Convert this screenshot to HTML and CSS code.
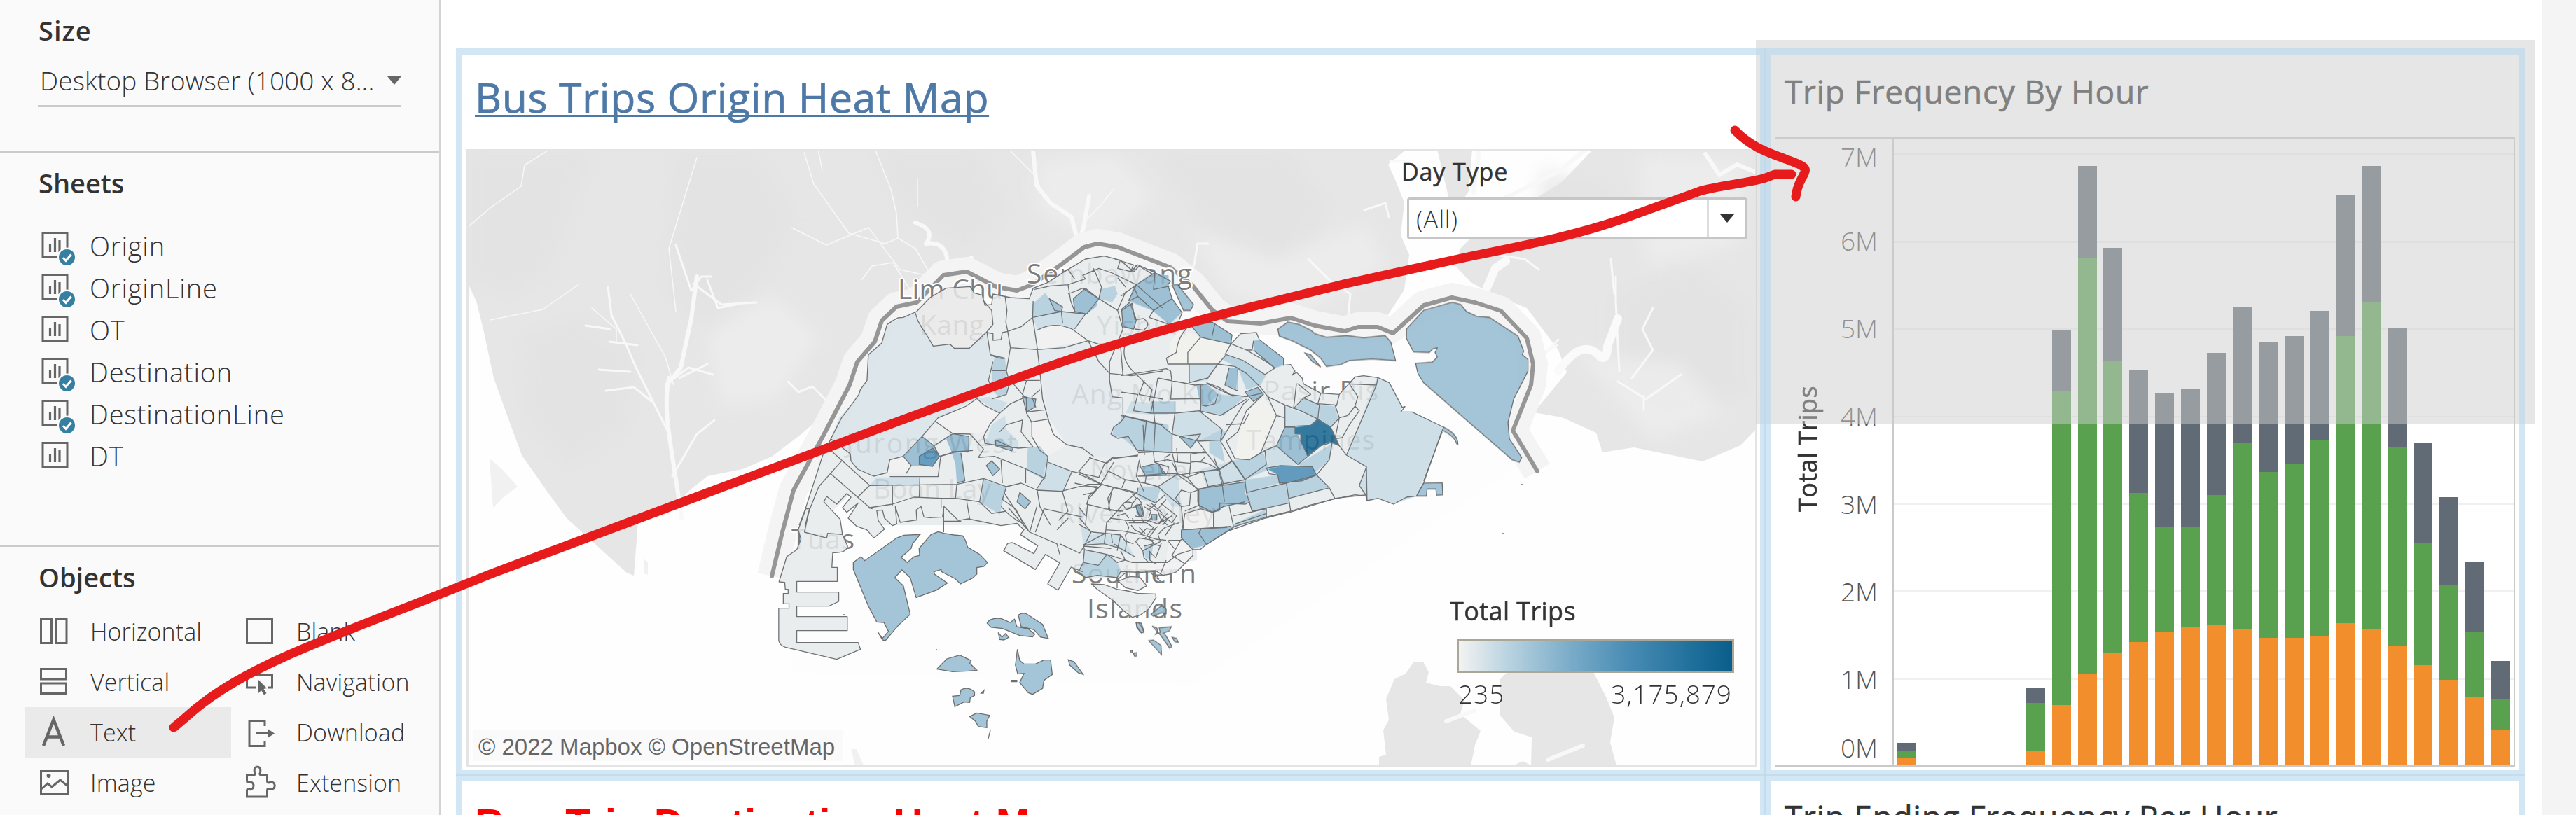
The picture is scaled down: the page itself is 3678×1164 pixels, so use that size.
FILE: index.html
```html
<!DOCTYPE html>
<html lang="en">
<head>
<meta charset="utf-8">
<title>Bus Trips Dashboard</title>
<link rel="stylesheet" href="styles.css">
</head>
<body>
<svg class="defs" aria-hidden="true">
  <symbol id="sheet" viewBox="0 0 50 50"><path d="M4 3.500h35v35h-35z" fill="none" stroke="#666" stroke-width="3"/><path d="M14.500 31V20M21.500 31V11M28 31V14" stroke="#666" stroke-width="3.200"/></symbol>
  <symbol id="check" viewBox="0 0 50 50"><circle cx="38.500" cy="38.500" r="14" fill="#fafafa"/><circle cx="38.500" cy="38.500" r="11.500" fill="#3580a0"/><path d="M33 39l4 4.500 7.500-9" fill="none" stroke="#fff" stroke-width="3"/></symbol>
</svg>
<div class="app">
  <aside class="side">
    <section class="size">
      <h2>Size</h2>
      <div class="select"><span class="sel-text">Desktop Browser (1000 x 8...</span><i class="tri"></i></div>
    </section>
    <section class="sheets">
      <h2>Sheets</h2>
      <ul>
        <li><svg viewBox="0 0 50 50"><use href="#sheet"/><use href="#check"/></svg><span>Origin</span></li>
        <li><svg viewBox="0 0 50 50"><use href="#sheet"/><use href="#check"/></svg><span>OriginLine</span></li>
        <li><svg viewBox="0 0 50 50"><use href="#sheet"/></svg><span>OT</span></li>
        <li><svg viewBox="0 0 50 50"><use href="#sheet"/><use href="#check"/></svg><span>Destination</span></li>
        <li><svg viewBox="0 0 50 50"><use href="#sheet"/><use href="#check"/></svg><span>DestinationLine</span></li>
        <li><svg viewBox="0 0 50 50"><use href="#sheet"/></svg><span>DT</span></li>
      </ul>
    </section>
    <section class="objects">
      <h2>Objects</h2>
      <div class="grid">
        <div class="obj"><svg viewBox="0 0 46 46"><path d="M1.500 4.500h15v35h-15zM23 4.500h15v35h-15z"/></svg><span>Horizontal</span></div>
        <div class="obj"><svg viewBox="0 0 46 46"><path d="M1.500 4.500h36v35h-36z"/></svg><span>Blank</span></div>
        <div class="obj"><svg viewBox="0 0 46 46"><path d="M1.500 4.500h36v14.500h-36zM1.500 25h36v14.500h-36z"/></svg><span>Vertical</span></div>
        <div class="obj"><svg viewBox="0 0 46 46"><path d="M15 31H1.500V13h36v18H32"/><path class="solid" d="M18 20l12 12-4.500 1 4 6-3.500 2.500-4-6.500-4 4z"/></svg><span>Navigation</span></div>
        <div class="obj on"><svg viewBox="0 0 46 46"><path stroke-width="4.500" d="M5 42L19.500 5 34 42M9.500 29.500h20"/></svg><span>Text</span></div>
        <div class="obj"><svg viewBox="0 0 46 46"><path d="M27 14V6.500H5v36h22V35M15 24.500h18"/><path class="solid" d="M32 18.500l9 6-9 6z"/></svg><span>Download</span></div>
        <div class="obj"><svg viewBox="0 0 46 46"><path d="M1.500 6.500h38.500v33H1.500zM2 32l9-8 6 5 12-10 11 9"/><circle class="solid" cx="12.500" cy="13" r="3"/></svg><span>Image</span></div>
        <div class="obj"><svg viewBox="0 0 46 46"><path d="M1.500 12h10c2 0 2-2 1-3.500C10-3 23-3 20.500 8.500c-1 1.500-1 3.500 1 3.500h9v9c0 2 2 2.500 4 1 9-2 9 12 0 10.500-2-1.500-4-1-4 1V43h-29V34c0-2 1.500-2.500 3.500-1.500 8 1.500 8-12 0-10.500-2 1-3.500 .5-3.500-1.500z"/></svg><span>Extension</span></div>
      </div>
    </section>
  </aside>

  <main class="board">
    <div class="zones">
      <section class="card origin">
        <h1><a>Bus Trips Origin Heat Map</a></h1>
        <div class="map">
          <svg class="geo" viewBox="666 213 1843 883" preserveAspectRatio="none">
            <g class="land">
              <path d="M666 213H2008L1982 235 1991 254 2005 289 2000 336 2012 364 2005 414 1975 460 1840 450 1750 460 1700 410 1660 380 1567 350 1452 415 1380 390 1309 432 1259 460 1215 545 1175 593 1144 620 1102 652 1060 670 1010 680 985 700 950 735 911 745 905 822 895 818 875 800 809 740 780 700 745 650 723 590 705 540 690 470 680 430 666 400Z"/>
              <path d="M2052 213h50l-5 60-12 18-15-2z"/>
              <path d="M2120 300L2190 285 2230 260 2275 213H2509V611L2485 636 2431 659 2333 639 2288 646 2279 618 2230 596 2190 589 2237 532 2225 500 2180 440 2130 420 2100 403 2078 380 2085 355 2110 330Z"/>
              <path d="M699 655l18 15 22 25-20 15-15 15z" class="lt"/>
              <path d="M919 798l6 5 0 18-6-2zM1215 1070h8l10 23h-12z" class="lt"/>
              <path d="M1969 1093v-12l10-3-4-35 8-15-4-30 12-28 16-8 12-17h13l8 15-4 15 20 5 15 0 20 20-6 20 15 12 14 12-8 20-8 40z"/>
              <path d="M2162 1093l12-6 12 6 1-40-25-8-21-24 0-50 25-25-5-18 10-10 18 4 2 12 9-12 0-10 15 8 60 40 18 35 12 30-6 35 8 30 8 10z"/>
            </g>
            <g class="tone">
              <path d="M666 213h190l-30 60-40 120-60 30-60-20zM960 213h120l60 100-50 90-80 60-60-40zM740 480l90-30 80 40-10 120-90 60-60-70zM1240 213h160l40 90-60 60-90-60zM1640 213h200l60 80-60 100-110-60zM2300 420l120-40 80 60v120l-120 40-80-70zM2200 240l110 30-20 60-100 10z"/>
            </g>
            <g class="tone2">
              <path d="M1010 480l90-60 70 60-60 90-80 10zM1480 230l110-10 60 60-80 70-90-50zM1700 330l120 40 130-50 30 60-120 70-110-30zM2340 220l150 10-10 120-130 30zM2250 500l150 20 60 70-100 40z"/>
            </g>
            <g class="river">
              <path d="M666 326l35-30 43-30 5-30 55-35 40-6M700 457l75-15 50-35M845 440l35 30 0 20M1168 213l6 30M1250 215l22 55 8 35 2 35 25 15 22 38 5 25M1282 340l-18 8-52-15-50-70-14-45M1310 295l0-40M1440 213l40 40 10 30M1590 270l-20 25-20 20M1130 325l50 25 60-25 45 60 45 10M1230 400l15-20 30-5 25 40M900 420l50 90 12 40M965 445l-10-90 40-130"/>
              <path class="w4" d="M868 410l5 40 20 40 15 35 20 40 25 50M836 465l35 5M855 528l45 3M865 558l40-5 25 20M870 488l40 5M965 350l10 30 12 35 14-20 15 0M990 405l40 30 50-3M1010 400l15 40 40-8M1018 535l-35-10-20 15M960 680l35-60 25-20M1125 545l15 15 20-8 18 18M1010 520l-40 20"/>
              <path class="w8" d="M995 395l-8 60-15 70-20 25M955 540c-10 50 5 100 18 200M1307 318q30 10 15 30 35-5 30 40l35-20M1475 215l5 50 20 25 30 20 10 40M1555 280l-8 45-10 30"/>
              <path class="w4" d="M1725 348l-15 0-5 30-5 10M1868 370l30 30 30 20-3 30M1985 230l20 0M1948 300l30-10 5 20M2142 365l35 5 20 15M2180 510l25-5 20-20M2305 420l-5-50M2312 530l-5-100 0-35M2330 540l30-40-15-30 15-30M2310 545l40 25 50-35M2347 565l0 20M2180 510l25-5 18-12"/>
              <path class="w14" d="M2225 530q35-50 60-20 10 5 10-15l15-40M2120 418l15-35 15-10"/>
              <path class="w8" d="M2435 220l20 30 25-15 25 10M2110 300l55-25 60-30 40-32M2112 215l-8 60M2210 935l10-12 15 2M2065 1030l40-15M2210 1085l50-20"/>
            </g>
            <path class="halo" d="M1102 823L1117 760 1133 700 1175 623 1213 550 1224 517 1249 488 1259 458 1280 438 1309 432 1347 393 1380 388 1423 410 1452 415 1473 407 1515 378 1548 353 1567 348 1596 353 1671 382 1702 407 1731 443 1753 459 1800 462 1843 454 1877 465 1920 473 1939 467 1967 467 1989 476 2033 436 2073 425 2106 432 2143 444 2180 483 2189 520 2186 550 2160 615 2195 673"/>
            <path class="inner" d="M1130 820L1150 710 1190 640 1235 550 1270 480 1310 450 1380 410 1470 430 1567 368 1660 400 1740 475 1850 480 1985 495 2050 450 2110 450 2165 500 2170 560 2140 620 2165 668 1700 980 1130 960Z"/>
            <path class="border" d="M1102 823L1117 760 1133 700 1175 623 1213 550 1224 517 1249 488 1259 458 1280 438 1309 432 1347 393 1380 388 1423 410 1452 415 1473 407 1515 378 1548 353 1567 348 1596 353 1671 382 1702 407 1731 443 1753 459 1800 462 1843 454 1877 465 1920 473 1939 467 1967 467 1989 476 2033 436 2073 425 2106 432 2143 444 2180 483 2189 520 2186 550 2160 615 2195 673"/>
            <g class="names">
              <text x="1282" y="427" textLength="150">Lim Chu</text><text x="1313" y="478" textLength="92">Kang</text>
              <text x="1466" y="405" textLength="236">Sembawang</text><text x="1566" y="479" textLength="130">Yishun</text>
              <text x="1530" y="577" textLength="216">Ang Mo Kio</text><text x="1208" y="647" textLength="244">Jurong West</text>
              <text x="1247" y="712" textLength="168">Boon Lay</text><text x="1556" y="685" textLength="140">Novena</text>
              <text x="1511" y="747" textLength="224">River Valley</text><text x="1804" y="572" textLength="164">Pasir Ris</text>
              <text x="1779" y="642" textLength="184">Tampines</text><text x="1130" y="784" textLength="90">Tuas</text>
              <text x="1530" y="833" textLength="178">Southern</text><text x="1552" y="883" textLength="136">Islands</text>
            </g>
            <g class="fills">
              <g class="base">
                <path transform="translate(1060 330) scale(.38265 .33333)" d="M1590 190L1530 185 1480 150 1460 175 1410 125 1350 107 1280 120 1200 175 1140 220 1085 245 1070 290 1000 285 935 270 930 315 905 318 895 275 865 265 850 238 760 245 700 285 650 345 600 370 540 400 520 480 470 530 465 640 410 740 370 800 330 890 300 960 235 1190 212 1260 360 1260 300 1155 340 1195 400 1130 415 1150 375 1200 430 1165 480 1260H1590Z"/>
                <path transform="translate(1060 660) scale(.40816 .33333)" d="M280 0L222 200 195 290 205 330 190 375 155 405 128 513 148 515 150 545 160 545 160 563 143 563 143 607 163 607 163 626 127 626 127 765Q130 785 150 793L330 845 413 802 405 773H190V722H367V662H190V617H303L337 597V557H190V511H332V451H313L316 388Q365 390 368 360L350 310 342 245 285 170 295 147 330 180 365 135 380 150 350 195 365 215 405 175 370 240 400 275 435 290 460 325 497 287 475 250 470 207 490 205 497 240 525 272 540 265 535 190 552 258 610 248 608 205 625 190 635 235 655 238 700 235 705 190 755 250 790 243 905 272 960 262 985 290 972 310 1033 358 1020 392 945 345 928 348 914 380 1025 460 1060 395 1110 432 1068 522 1104 549 1150 450 1190 470 1215 500 1320 495 1350 460 1590 420V0Z"/>
                <path transform="translate(1540 640) scale(.33333)" d="M0 0H1260V225L1235 230V200L1185 205 1100 215 905 275 800 300 640 355 600 380 545 415 520 435 490 435 490 460 455 495 420 530 390 540 360 545 330 525 180 530 165 555 80 545 30 555 0 530Z"/>
                <path transform="translate(1600 330) scale(.40816 .33333)" d="M-20 185V120L45 145 60 145 115 175 175 215 165 230 180 290 215 350 205 380 250 405 320 390 390 445 385 485 420 440 475 435 485 465 570 545V575L595 572 610 600 635 630 640 655 700 695 765 700 820 625 850 620 900 628 940 650 985 755 980 775 1020 775 1130 840 1120 870 1060 1080 1035 1135 1000 1140 955 1170 900 1145 862 1155 860 1135 750 1147 595 1200 510 1225 400 1265 330 1320H-20Z"/>
                <path transform="translate(1540 640) scale(.33333)" d="M55 582L110 585 165 605 210 612 250 622 330 625 332 640 300 690 265 715 230 725 190 695 150 655 80 605ZM170 570L220 550 262 553 292 590 255 610 200 598Z"/>
              </g>
              <g transform="translate(1060 330) scale(.38265 .33333)">
                <path fill="#d7e2e8" d="M645 350L655 385 670 415 690 450 712 493 775 485 790 502 847 502 912 432 925 530 980 545 935 560 918 640 900 690 875 718 835 750 730 800 670 880 600 965 550 980 550 1020 490 1050 430 1020 405 985 403 955 330 890 360 800 410 740 435 690 465 640 470 530 490 510 520 480 540 400 600 370Z"/>
                <path fill="#e8e8e8" d="M650 345L700 285 760 245 850 238 865 265 895 275 935 370 932 400 912 432 847 502 790 502 775 485 712 493 685 430 665 400Z"/>
                <path fill="#e0e7eb" d="M1100 508L1290 470 1330 560 1370 610 1380 710 1420 715 1425 800 1380 850 1440 890 1475 945 1400 975 1310 965 1210 915 1145 805Z"/>
                <path fill="#efefef" d="M720 815L785 770 875 718 960 780 900 860 850 870 785 868ZM1100 425Q1160 385 1230 420L1290 470 1100 508ZM1075 818L1145 805 1210 915 1140 965 1080 920ZM550 985L600 965 630 1005 610 1040 540 1035Z"/>
                <path class="m" d="M1235 290L1280 245 1330 290 1320 325 1285 355 1240 345ZM1415 335L1445 305 1470 380 1460 420 1420 410ZM1465 240L1530 185 1590 190V350L1540 330ZM670 880L715 920 735 965 710 1005 630 1005 600 965ZM760 890L785 868 845 880V945L780 945Z"/>
                <path class="n" d="M1080 315L1130 265 1150 300 1190 345 1085 370ZM940 545L980 545 985 600 930 598ZM930 600L985 600 990 690 960 715 930 680ZM1065 930L1110 920 1140 965 1120 1060 1060 1025ZM900 1065L985 1095 960 1215 890 1165ZM1430 790L1590 830V940L1475 945 1440 890 1380 880 1385 840ZM1335 250L1390 235 1400 270 1380 305 1330 290Z"/>
                <path class="l" d="M1085 370L1190 345 1280 355 1240 420 1170 400 1100 425ZM475 1090L500 1055 662 1055V1090ZM875 718L920 710 990 735 960 780ZM905 910L930 830 980 790 985 850 1030 900 1030 930ZM1140 990L1230 1030 1195 1120 1100 1110ZM1450 730L1590 740V790L1430 780Z"/>
                <path class="k" d="M780 945L815 950 825 1000 830 1070 800 1080 795 1000ZM945 895L965 892 1010 930 1005 942 945 920ZM910 1005L930 985 960 1020 935 1048ZM1035 1120L1075 1160 1055 1190 1025 1160ZM1045 710L1095 720 1090 755 1060 775ZM1145 290L1195 325 1190 345 1165 340Z"/>
                <path fill="#4f8fb6" d="M660 965L710 930 735 965 710 1008 660 1000Z"/>
              </g>
              <g transform="translate(1060 660) scale(.40816 .33333)" class="isle">
                <path d="M388 430L415 405 428 422 540 325 565 313 622 310 595 350 590 370 555 408 577 430 600 405 620 400 618 370 660 310 685 298 705 305 740 312 770 315 780 335 788 365 830 395 857 430 845 447 820 452 820 480 805 497 763 522 745 500 697 470 695 460 670 470 672 480 717 518 680 548 608 580 587 495 558 462 533 495 563 530 587 652 545 700 500 765 490 762 475 730 490 755 511 725 495 687 470 685 440 615 388 460Z"/>
                <path d="M856 690Q865 665 905 670L937 687 952 673 960 705 1000 715 1023 737 1015 749 970 743 910 713 870 708ZM965 655Q985 640 1000 655L1050 695 1070 755 1043 750 1020 718 975 705ZM895 730L900 760 915 762 932 750 920 735 908 750ZM680 887L715 843 760 827 800 850 795 862 820 892 790 895 735 898ZM962 802L970 850 985 865 1025 865 1055 848H1078L1084 910 1055 935 1050 970 1015 995 1000 988 970 945 985 905 963 908 955 870ZM1140 847L1160 855 1192 910 1175 903 1145 870ZM940 935h20v6h-20zM765 975Q790 960 812 985V1000L797 1010 795 1030 775 1028 743 1048 735 1003 760 1000ZM795 1090L820 1075 865 1085 855 1110 855 1138 825 1133 815 1110ZM835 990L845 978 843 990ZM1377 687L1395 690 1405 725 1395 732 1380 710Z"/>
              </g>
              <g transform="translate(1600 330) scale(.40816 .33333)">
                <path class="isle" d="M550 420L585 390 625 400 665 425 680 440 720 455 790 448 850 457 925 448 945 475 962 555 880 548 800 555 770 572 720 580 700 545 665 510 600 470 555 450ZM645 523L665 530 700 583 670 558ZM1000 420L1060 340 1160 305 1190 315 1210 345 1245 365 1290 370 1390 450 1410 515 1405 530 1425 550V600L1375 720 1355 820 1360 890 1403 970 1395 990 1370 980 1060 650 1040 610 1032 567 1090 562 1108 540 1100 520 1108 500 1092 505 1080 520 1025 518 1000 460ZM180 230L200 230 255 315 245 340 220 340ZM1060 1080L1125 1078 1127 1130 1105 1132 1103 1105H1072L1070 1135H1035ZM1130 840Q1180 870 1180 913L1175 910Q1170 880 1120 850Z"/>
                <path class="m" d="M45 235L120 178 175 220 165 230 180 290 215 350 170 400 110 340 30 300ZM245 405L320 390 390 445 385 485 280 455ZM465 470L485 465 570 545 570 575 540 587 465 510ZM380 585L410 585 405 680 365 660ZM435 690L480 670 500 700 465 730ZM575 840L610 840 630 900 655 965 620 1000 545 920ZM270 1105L435 1075V1160L360 1180 345 1200 280 1190ZM205 880L280 870 245 930ZM75 1010L130 995 160 1045 90 1045ZM5 340L40 310 50 380 40 420 5 400ZM215 1280L400 1265 330 1320H215ZM265 660L300 655 345 700 300 750 280 745Z"/>
                <path class="n" d="M340 540L370 530 430 555 510 615 490 660 440 680 410 585ZM345 700L435 710 360 790 280 770 280 745 300 750ZM440 1120L580 1080 590 1165 460 1200ZM580 1080L685 1045 730 1100 590 1145ZM390 985L500 950 520 1020 435 1065ZM620 1000L740 910 730 980 680 1035ZM435 1065L550 1045 555 1080 440 1120ZM695 745L750 750 760 800 735 840 695 805ZM0 790L140 830 180 870 180 950 60 940 0 880ZM350 850L370 860 355 900 270 900ZM395 1260L510 1215 510 1225 400 1265ZM610 760L640 715 690 740 695 805ZM310 900L350 895 365 990 310 950ZM105 730L190 730 190 780 105 780Z"/>
                <path class="l" d="M190 780L275 770 350 850 270 900 180 870ZM895 630L940 650 985 755 980 775 1020 775 1130 840 1035 1135 955 1170 900 1145 862 1155 835 1090 860 1010 790 960 830 840ZM575 750L690 805 665 832 575 838ZM505 940L545 920 620 1000 520 1020ZM240 570L340 570 305 640 240 650ZM280 1020L390 985 435 1065 300 1095Z"/>
                <path fill="#efefec" d="M400 975L410 890 440 770 500 715 545 790 490 950 450 980ZM170 570V480L210 420 290 460 235 570ZM235 570L240 520 290 460 385 485 365 530 340 570Z"/>
                <path fill="#16648f" d="M610 840L665 832 690 805 735 840 765 920 730 905 700 920 655 965 630 900V870L610 868Z"/>
                <path fill="#4a8bb4" d="M515 1020L560 1005 670 1010 685 1045 635 1070 555 1080 550 1045Z"/>
              </g>
              <g transform="translate(1540 640) scale(.33333)">
                <path class="m" d="M515 180L710 140 712 190 735 230 620 250 600 270 575 275 515 245ZM440 350L635 340 640 355 600 380 545 415 490 430 440 385ZM245 245L270 240 280 280 262 295 248 280ZM312 285H335V308H315ZM270 85L345 68 355 110 285 115Z"/>
                <path class="n" d="M665 325L800 262V290L665 335ZM0 530L20 490 85 502 122 455 165 490 185 530 165 555 80 545 30 555ZM280 420L320 410 310 480 285 470ZM260 165L340 165 350 180 330 235 270 220 250 200Z"/>
                <path class="l" d="M25 435L120 455 85 502 20 490ZM50 370L110 365 110 410 25 418ZM110 370H180L200 440 110 410ZM185 395L205 405 240 465 180 440ZM0 250L25 290 10 330 60 360 20 415ZM340 165L425 110 440 250 400 250Z"/>
                <path fill="#efefef" d="M180 530L230 490H380L360 545 330 525ZM385 395H440L490 435 490 460 420 530 360 515 375 480ZM450 350L455 270 520 255 575 290 578 340Z"/>
                <path class="isle" d="M310 712L355 675 375 690V710L355 705 320 720ZM247 748Q262 740 280 790L270 790Q250 775 247 748ZM315 763L335 770 340 785 330 797 350 790 345 770 397 765 390 782 365 792 375 805 400 850 390 857 350 800ZM300 825L320 822 353 845 355 885ZM400 810L420 815 427 832 412 830ZM222 868h8v8h-8zM235 880l15-4v14l-10 2z"/>
              </g>
            </g>
            <g class="lines">
              <g transform="translate(1060 330) scale(.38265 .33333)">
                <path d="M1530 185L1480 150 1460 175 1410 125 1350 107 1280 120 1200 175 1140 220 1085 245 1070 290 1000 285 935 270 930 315 905 318 895 275 865 265 850 238 760 245 700 285 650 345 600 370 580 372 560 385 540 400 530 440 520 480 490 510 470 530 465 640 440 680 435 700 410 740 370 800 330 890 300 960 235 1190 212 1260M285 1095L245 1210 235 1260M1410 125L1400 160 1455 175 1470 145"/>
                <path d="M980 278L987 340 983 390 990 430 1000 500 985 600 995 640M1085 300L1083 370 1100 500 1110 600 1120 720 1145 820 1160 870 1210 915 1270 930 1310 965M990 430L1040 410 1083 370 1190 345 1280 355 1240 420M912 435L935 440V468L965 465 970 435 990 430M1000 500L1100 508 1200 500 1290 470 1330 485 1410 480M1100 425Q1160 385 1230 420L1290 470 1330 560 1370 610 1450 620 1568 600M1330 290L1400 340 1420 420 1370 560 1370 640 1380 710 1420 715V790L1568 830M930 598H985M1110 640L1000 640 1060 720 1060 780 1080 820V880L1110 940 1140 965 1130 1050 1095 1110M1145 805L1075 818M1060 775L1135 765M1090 250L1150 235 1215 230 1280 205 1270 190 1330 160 1380 180 1470 230 1568 330M1215 230L1225 300 1240 345M1215 165L1240 205M1310 160L1340 240 1330 290 1270 245 1215 270M720 815L785 868 850 870 900 935 880 970 940 965 1060 1020 1130 1060M960 780L925 825 900 880 905 910 1030 930 1080 925M550 1052L730 1052 740 965 800 945 860 940M475 1090L800 1085 900 1060 985 1095 1040 1080 1100 1110 1190 1115 1290 1085 1340 1085 1470 1125M560 1090V1175M662 1055L660 1140M800 1085L795 1145M900 1060L885 1160M475 1185L560 1170 640 1140 740 1145 795 1145 885 1160 930 1210 985 1200M330 940L475 1090 430 1140M370 985L285 1095M330 1040L475 1185M965 980L970 1080M1057 1020V1080M1140 990L1230 1030 1330 1055 1350 1000 1380 970 1475 965M1230 1030L1195 1120M1300 970L1255 1030 1340 1085 1290 1150 1280 1260M925 530Q960 550 980 545M645 350L655 385 670 415 690 450 712 493 775 485 790 502 847 502 912 432 935 400 930 340 900 300M912 432L925 530 980 545M935 560L918 640 930 670M875 718L835 750 730 800 670 880 600 965 550 980 540 1035 490 1050 430 1020 405 985 403 955 330 890M875 718L900 745 960 780 1000 740 1060 710M670 880L715 920 785 868M715 920L735 965 780 950M600 965L630 1005 610 1040M1190 345L1195 395M1410 480L1420 620M1500 640L1480 700 1568 720M1495 830L1500 960M1530 730L1540 830 1535 940M1100 1110L1110 1180 1150 1260M985 1095L970 1150 1020 1190 1050 1260M1380 1100L1365 1195 1420 1200M1195 1120L1215 1200 1180 1240M1240 1080L1320 1100M1085 925L1040 860 1045 810 985 830 960 860M1060 640L1045 700M1110 680L1080 710 1095 755M1000 640L985 700 930 720M1480 985L1470 1050 1500 1120M1430 240L1400 200M1430 260L1400 340M1440 300L1470 230"/>
                <path d="M785 868L845 880V945L780 945M815 950L830 1070 800 1080M945 895L1010 930 1005 942 945 920ZM910 1005L930 985 960 1020 935 1048ZM1035 1120L1075 1160 1055 1190 1025 1160ZM1045 710L1095 720 1090 755 1060 775ZM1145 290L1195 325 1190 345 1165 340ZM660 965L710 930 735 965 710 1008 660 1000ZM1415 335L1445 305 1470 380 1460 420 1420 410ZM1235 290L1280 245 1330 290 1285 355 1240 345ZM1430 790L1410 820 1385 840 1375 870 1400 888 1440 880 1475 945"/>
              </g>
              <g transform="translate(1060 660) scale(.40816 .33333)">
                <path d="M222 200L195 290 205 330 190 375 155 405 128 513 148 515 150 545 160 545 160 563 143 563 143 607 163 607 163 626 127 626 127 765Q130 785 150 793L330 845 413 802 405 773H190V722H367V662H190V617H303L337 597V557H190V511H332V451H313L316 388Q365 390 368 360L350 310 342 245 285 170 295 147 330 180 365 135 380 150 350 195 365 215 405 175 370 240 400 275 435 290 460 325 497 287 475 250 470 207 490 205 497 240 525 272 540 265 535 190 552 258 610 248 608 205 625 190 635 235 655 238 700 235 705 190 755 250 790 243 905 272 960 262 985 290 972 310 1033 358 1020 392 945 345 928 348 914 380 1025 460 1060 395 1110 432 1068 522 1104 549 1150 450 1190 470"/>
                <path d="M235 200L217 300 295 325 298 305 350 310M222 200H235M704 190V300M704 253H765M785 170L795 243M695 158V195M455 200L440 195M930 195L1005 300M915 130L1000 290M1030 190L1005 300 1100 350 1110 395M1025 300L1055 200 1190 235M1100 290L1140 240M1110 350L1180 390 1195 360 1290 370M1195 360L1220 300 1180 240M905 190Q940 240 980 262"/>
              </g>
              <g transform="translate(1600 330) scale(.40816 .33333)">
                <path d="M-20 120L45 145 35 175 60 145 115 175 175 215 165 230 180 290 215 350 205 380M250 405L320 390 390 445 385 485 420 440 475 435 485 465 570 545V575L595 572 610 600 600 618 615 605 635 630 640 655 700 695 765 700 820 625 850 620 900 628 940 650 985 755 995 752 980 775 1020 775 1130 840 1120 870 1060 1080 1035 1135 1000 1140 955 1170 900 1145 862 1155 860 1135 820 1130 750 1147 660 1175 595 1200 510 1225 400 1265 330 1320"/>
                <path d="M240 405Q200 450 195 520L160 545 165 570 240 570 340 570 400 580 440 610 490 670 515 710 575 745 630 770 690 805 735 840 765 920 790 960 860 1010 835 1090 860 1135M0 620L160 590 175 600 180 650M235 570V520L280 455 250 410M280 455L390 485 440 510 510 560 540 587 505 615 430 555 370 530 340 570 305 630 240 650 240 570M465 470L460 510 440 510M465 510L540 587M330 395L320 450M385 485L365 530M130 630L260 660 305 655 380 700 440 710 495 695M130 630L120 700 105 780 190 780 275 770 350 790 440 720M180 650L175 720 280 718V660M280 718V770M190 730V780L180 870 270 900 350 895 355 850 275 770M0 790L140 830 180 870V950L200 1045M90 810L80 940M0 690L60 700 45 770 105 780M60 940L200 950 300 950 345 1020 390 985 350 900 370 860 430 740 450 720M270 900L300 950M390 985L435 1065 440 1120 460 1200M345 1020L360 1085M500 700L440 770 410 860 370 900 400 975 450 980 490 950 545 790 515 710M545 790L575 800V840L545 920 505 940 450 980M575 745V838L665 832 690 805 695 745 640 715M545 920L620 1000 655 965M575 840H610V868L630 870V900L655 965 700 920 740 905 765 920M740 905L730 980 685 1045 580 1080 440 1120M505 940L510 1000 435 1065M510 1015L560 1005 670 1010 685 1045 635 1070 555 1080 550 1045 520 1040ZM685 1045L730 1100 750 1147M580 1080L595 1200M590 1145L730 1100M460 1200L590 1165M200 1045L270 1105 435 1075M360 1085L345 1020 200 1045 60 1050M270 1105V1160L280 1190 320 1205 360 1180 435 1160M380 1180L395 1265M220 1280L385 1265M280 1190L225 1210 215 1280M395 1220L510 1190V1225M400 1255L510 1210M615 655L605 760 640 715 665 700 620 655ZM700 695L690 740 750 745 765 800 735 840M765 800L750 890 775 885 800 830 835 770 820 750 795 790 765 800M765 700L755 750M820 625L800 655 830 710 820 750M800 655L895 660 790 960M900 628L895 660M0 280L50 235 120 178M120 178L115 250 175 235M30 300L60 280 115 340 180 290M115 340L100 370 170 400M60 280L45 235M5 340L40 310 50 380 80 375Q110 400 80 425L50 420M15 490Q0 560 60 620L110 680 100 730M380 585L365 660 410 685 410 585M435 690L480 670 500 700 465 730ZM205 880L280 870 245 930ZM300 650L345 670 395 710M340 700L330 740 300 750 280 745M75 1010L130 995 160 1045M370 830L430 825 450 780M860 1010L862 1155"/>
                <path d="M1125 860L1060 1070" stroke-width="2.600"/>
              </g>
              <g transform="translate(1540 640) scale(.33333)">
                <path d="M1235 200L1185 205 1100 215 905 275 880 280 800 300 640 355 600 380 545 415 520 435 490 435 490 460 455 495 420 530 390 540 360 545 330 525 180 530 165 555 80 545 30 555 0 530M55 582L110 585 165 605 210 612 250 622 330 625 332 640 300 690 265 715 230 725 190 695 150 655 80 605ZM170 570L220 550 262 553 292 590 255 610 200 598ZM165 555V600M170 560L200 535 320 530 345 560M310 535L350 570M220 530V550M258 530V552"/>
                <path d="M0 110L95 155 250 190 190 240 165 270 120 320 115 365 20 415 25 435 120 455 200 480 230 490H380L425 455 490 435M45 40L120 65 145 45 255 30M95 155L150 60M100 155L45 205 35 240 115 260 180 270M150 170L125 215 135 270M120 95L200 135 285 150 290 115 360 110 425 110 465 125 535 100 600 95M200 135L185 170M260 50L265 80 285 115M285 150L340 165 425 110M340 165L380 200 440 250 450 350M255 170L250 195 330 235 370 200M465 125L510 180 555 165 715 135M510 180L480 190 475 245 440 250M515 245L575 275 605 265 605 235 715 240 735 230M515 180V245L455 270M555 165L535 100M600 95L615 155 625 230M440 350L635 340 575 340M578 340V280M525 345L515 365 550 415M440 350V385L490 435M385 395H440M440 390L400 460 455 495M385 400L410 430M375 480L350 540M30 290L0 250M0 325L60 360 115 365 110 410 20 415M110 410L180 430 240 465M115 365L180 372 165 440M140 370L145 405M180 372L205 405 200 440M85 502L122 455 165 490 200 480 180 440M20 490L85 502M25 435L20 490 0 530M115 350L190 355 270 370 330 390 375 395M135 300L210 310 300 310 340 325 400 290M200 310L215 340 205 370M225 330L240 350 270 365 290 345 320 350M245 400L260 385 320 395M240 395L275 440 280 470 300 490M275 440L350 400 340 370 370 340 430 320M280 420L320 410 350 420M300 440L330 470 355 405M305 440V480L330 495M190 240Q200 225 230 235L225 255 200 258ZM165 290L200 280 215 300M200 265L245 250 262 295 240 290M245 245L270 240 280 290 260 295ZM280 250L310 270 300 300M290 240L340 270 350 300M310 235L360 280M330 240L300 265M350 235L420 290 400 320 350 280M340 260L375 220M312 285H335V308H315ZM350 300L380 330M215 320L290 320 320 340 285 385M290 320L310 300M330 345L300 385M340 325L380 280M360 305L345 325M385 300L360 330M410 320L370 375M435 240L415 215 440 180 475 190M400 60L425 110M420 0L425 60 480 65 475 115M480 65L480 25 540 15M480 60Q550 50 600 95M255 20L330 15 410 20M320 15L325 60 345 68 360 110M325 60L380 50 425 60M345 68L385 80 380 110M600 95L580 40M600 95L660 55 715 135M540 40L520 60M10 165L80 165 65 190 20 200M370 60V40L395 25"/>
                <path d="M245 250l17-6 14 40-14 10zM228 195l20 20-15 20M250 210l20 25M200 370l5 30 30 10M320 350l20-15M260 340l25 25M150 410l30 20M270 300l10 20M230 300l10 20M300 385l20 20"/>
              </g>
              <path d="M2171 692h3M2144 762h3M1204 878h3M1336 928h2M1414 1043l-3 12" stroke-width="3"/>
            </g>
          </svg>
          <label class="ftitle">Day Type</label>
          <div class="filter"><span>(All)</span><b><i class="tri dark"></i></b></div>
          <div class="legend">
            <div class="ltitle">Total Trips</div>
            <div class="ramp"></div>
            <div class="range"><span>235</span><span>3,175,879</span></div>
          </div>
          <div class="credit">© 2022 Mapbox © OpenStreetMap</div>
        </div>
      </section>

      <section class="card freq">
        <h3>Trip Frequency By Hour</h3>
        <div class="chart">
          <div class="axis">
            <div class="aname">Total Trips</div>
            <div class="ticks"><span>7M</span><span>6M</span><span>5M</span><span>4M</span><span>3M</span><span>2M</span><span>1M</span><span>0M</span></div>
          </div>
          <div class="plot">
            <i class="bar" style="--t:32px;--g:20px;--o:11px"></i><i></i><i></i><i></i><i></i>
            <i class="bar" style="--t:110px;--g:89px;--o:20px"></i>
            <i class="bar" style="--t:622px;--g:535px;--o:86px"></i>
            <i class="bar" style="--t:856px;--g:724px;--o:131px"></i>
            <i class="bar" style="--t:739px;--g:577px;--o:161px"></i>
            <i class="bar" style="--t:565px;--g:389px;--o:176px"></i>
            <i class="bar" style="--t:532px;--g:341px;--o:191px"></i>
            <i class="bar" style="--t:538px;--g:341px;--o:197px"></i>
            <i class="bar" style="--t:589px;--g:386px;--o:200px"></i>
            <i class="bar" style="--t:655px;--g:461px;--o:194px"></i>
            <i class="bar" style="--t:604px;--g:419px;--o:182px"></i>
            <i class="bar" style="--t:613px;--g:431px;--o:182px"></i>
            <i class="bar" style="--t:649px;--g:464px;--o:185px"></i>
            <i class="bar" style="--t:814px;--g:613px;--o:203px"></i>
            <i class="bar" style="--t:856px;--g:661px;--o:194px"></i>
            <i class="bar" style="--t:625px;--g:455px;--o:170px"></i>
            <i class="bar" style="--t:461px;--g:317px;--o:143px"></i>
            <i class="bar" style="--t:383px;--g:257px;--o:122px"></i>
            <i class="bar" style="--t:290px;--g:191px;--o:98px"></i>
            <i class="bar" style="--t:149px;--g:95px;--o:50px"></i>
          </div>
        </div>
      </section>

      <section class="card dest"><h1>Bus Trip Destination Heat Map</h1></section>
      <section class="card ending"><h3>Trip Ending Frequency Per Hour</h3></section>
    </div>
  </main>
  <div class="gutter"></div>
</div>
<div class="drop"></div>
<svg class="ink" viewBox="0 0 3678 1164">
  <path d="M248 1039C262 1028 275 1015 290 1004C370 942 500 901 700 820L1060 685 1287 600 1485 528C1600 487 1700 460 1800 435L1922 405 2100 366C2180 350 2260 334 2330 308L2391 286 2427 273C2450 266 2490 262 2518 255L2534 249H2558"/>
  <path d="M2477 186C2500 210 2525 218 2549 227C2580 238 2580 240 2575 250C2568 263 2566 268 2564 281"/>
</svg>
</body>
</html>
```
FILE: styles.css
```css
* { box-sizing: border-box; margin: 0; padding: 0; }
html, body { width: 3678px; height: 1164px; overflow: hidden; }
body { position: relative; background: #fff; color: #333; font-family: "Open Sans", "Noto Sans", sans-serif; }
.defs { display: none; }
.app { display: flex; height: 1164px; }

/* Left panel */
.side { width: 630px; flex: none; background: #fafafa; border-right: 3px solid #d3d3d3; overflow: hidden; }
.side h2 { font-size: 38px; font-weight: 600; line-height: 60px; padding-left: 55px; }
.size { height: 218px; border-bottom: 3px solid #cbcbcb; padding-top: 13px; }
.size h2 { letter-spacing: 1px; }
.select { display: flex; align-items: center; justify-content: space-between; width: 519px; margin: 6px 0 0 54px; height: 74px; border-bottom: 3px solid #cbcbcb; font-size: 37px; font-weight: 300; letter-spacing: .1px; padding-left: 3px; }
.tri { border: 10.5px solid transparent; border-top: 12px solid #666; border-bottom: 0; }
.tri.dark { border-top-color: #333; }
.sheets { height: 563px; border-bottom: 3px solid #cbcbcb; padding-top: 13px; }
.sheets ul { list-style: none; padding: 30px 0 0 57px; }
.sheets li { display: flex; align-items: center; height: 60px; font-size: 38px; font-weight: 300; letter-spacing: .8px; }
.sheets li svg { width: 50px; height: 50px; margin: 6px 21px 0 0; }
.objects h2 { padding-top: 13px; }
.grid { display: grid; grid-template-columns: 294px 294px; grid-auto-rows: 72px; padding: 12px 0 0 36px; }
.obj { display: flex; align-items: center; padding-left: 21px; font-size: 34px; font-weight: 300; letter-spacing: .1px; }
.obj svg { width: 46px; height: 46px; margin-right: 26px; fill: none; stroke: #666; stroke-width: 3; overflow: visible; }
.obj .solid { fill: #666; stroke: none; }
.obj.on { background: #eaeaea; }

/* Dashboard canvas */
.board { flex: 1; overflow: hidden; padding: 69px 0 0 21px; }
.gutter { width: 49px; flex: none; background: #f4f4f4; }
.zones { display: grid; grid-template-columns: 1871px 1083px; grid-template-rows: 1040px 400px; }
.card { position: relative; padding: 9px; }
.card::after { content: ""; position: absolute; inset: 0; border: 9px solid rgba(186, 216, 236, .64); z-index: 2; pointer-events: none; }
.freq, .ending { margin-left: -3px; }
.dest, .ending { margin-top: -3px; }
.card h1 { font-size: 59px; font-weight: 400; line-height: 120px; padding-left: 18px; height: 135px; white-space: nowrap; letter-spacing: .57px; }
.origin h1 a { color: #4e79a7; -webkit-text-stroke: .7px #4e79a7; text-decoration: underline; text-decoration-thickness: 3px; text-underline-offset: 3px; text-decoration-skip-ink: none; }
.card.dest h1 { font: bold 58.5px/124px "Liberation Sans", Arial, sans-serif; letter-spacing: .6px; color: #f00; }
.card h3 { font-size: 46px; font-weight: 400; line-height: 104px; padding-left: 20px; letter-spacing: .7px; white-space: nowrap; -webkit-text-stroke: .7px #333; }
.ending h3 { line-height: 102px; }

/* Map */
.map { position: relative; width: 1843px; height: 883px; margin-left: 6px; overflow: hidden; border: 3px solid #e4e4e4; background: #fefefe; }
.geo { position: absolute; left: -3px; top: -3px; width: 1843px; height: 883px; }
.land { fill: #e6e6e6; }
.lt { fill: #f1f1f1; }
.tone { fill: #e2e2e2; opacity: .6; filter: blur(12px); }
.tone2 { fill: #efefef; opacity: .7; filter: blur(12px); }
.river { fill: none; stroke: #f8f8f8; stroke-width: 1.5; stroke-linejoin: round; stroke-linecap: round; }
.river .w4 { stroke-width: 3; }
.river .w8 { stroke-width: 6; }
.river .w14 { stroke-width: 12; stroke: #fafafa; }
.halo { fill: none; stroke: #f4f4f4; stroke-width: 42; stroke-linejoin: round; }
.inner { fill: #fdfdfd; }
.border { fill: none; stroke: #969696; stroke-width: 6; stroke-linejoin: round; stroke-linecap: round; }
.names text { font: 400 39px "Open Sans", sans-serif; fill: #7d7d7d; stroke: #fff; stroke-width: 4; paint-order: stroke; stroke-linejoin: round; }
.fills { opacity: .86; }
.base { fill: #e6eaec; }
.isle { fill: #95bcd2; }
.m { fill: #8db6cf; }
.k { fill: #96bcd2; }
.n { fill: #adcbdb; }
.l { fill: #c6dae4; }
.lines path { fill: none; stroke: #6e7174; vector-effect: non-scaling-stroke; stroke-width: 1.3; stroke-linejoin: round; }
.fills .isle path, .fills path.isle { stroke: #555; stroke-width: 1.3; vector-effect: non-scaling-stroke; }
.ftitle { position: absolute; left: 1332px; top: 5px; font-size: 34px; line-height: 48px; letter-spacing: .9px; -webkit-text-stroke: .6px #333; }
.filter { position: absolute; left: 1340px; top: 66px; width: 486px; height: 60px; background: #fff; border: 3px solid #c6c6c6; border-radius: 4px; display: flex; align-items: center; justify-content: space-between; padding-left: 10px; font-size: 35px; font-weight: 300; letter-spacing: .8px; }
.filter b { width: 55px; height: 54px; border-left: 3px solid #ddd; display: flex; align-items: center; justify-content: center; }
.legend { position: absolute; left: 1401px; top: 632px; width: 406px; }
.ltitle { font-size: 36px; line-height: 50px; letter-spacing: .4px; -webkit-text-stroke: .6px #333; }
.ramp { margin: 15px 0 0 10px; height: 48px; border: 3px solid #aaa798; background: linear-gradient(90deg, #f3f3f2, #b9d3e0 18%, #7cadc9 40%, #4d8fb6 60%, #20709c 85%, #0a5e8b); }
.range { display: flex; justify-content: space-between; padding: 5px 3px 0 12px; font-size: 37px; font-weight: 300; line-height: 50px; letter-spacing: 1px; }
.credit { position: absolute; left: 6px; top: 827px; width: 528px; height: 44px; padding-left: 8px; background: #fafafa; color: #666; font: 33px/48px "Liberation Sans", Arial, sans-serif; white-space: nowrap; }

/* Bar chart */
.chart { display: flex; margin: 13px 0 0 6px; width: 1057px; height: 901px; border-top: 3px solid #c9c9c9; border-bottom: 3px solid #c9c9c9; }
.axis { width: 168px; display: flex; justify-content: space-between; }
.aname { writing-mode: vertical-rl; transform: rotate(180deg); width: 50px; margin-left: 22px; text-align: center; line-height: 50px; font-size: 36px; letter-spacing: .4px; padding-top: 9px; -webkit-text-stroke: .6px #333; }
.ticks { width: 74px; padding: 1px 22px 0 0; text-align: right; font-size: 37px; font-weight: 300; color: #555; }
.ticks span { display: block; height: 125.300px; line-height: 50px; }
.ticks span:nth-child(1) { height: 120px; }
.ticks span:nth-child(7) { height: 98px; }
.plot { flex: 1; display: grid; grid-template-columns: repeat(24, 1fr); align-items: end; justify-items: center; border: 2px solid #c9c9c9; border-width: 0 2px; background: repeating-linear-gradient(to top, transparent 0 122.300px, #f0f0f0 122.300px 124.800px); }
.bar { width: 27px; height: var(--t); margin-right: 1px; background: linear-gradient(to top, #f28e2b var(--o), #59a14f var(--o) var(--g), #616b75 var(--g)); }

/* Drop target shading and pen mark */
.drop { position: absolute; left: 2507px; top: 57px; width: 1112px; height: 548px; background: rgba(205, 205, 205, .5); z-index: 1; }
.ink { position: absolute; left: 0; top: 0; width: 3678px; height: 1164px; z-index: 3; fill: none; stroke: #e81b1c; stroke-width: 13; stroke-linecap: round; stroke-linejoin: round; }
```
